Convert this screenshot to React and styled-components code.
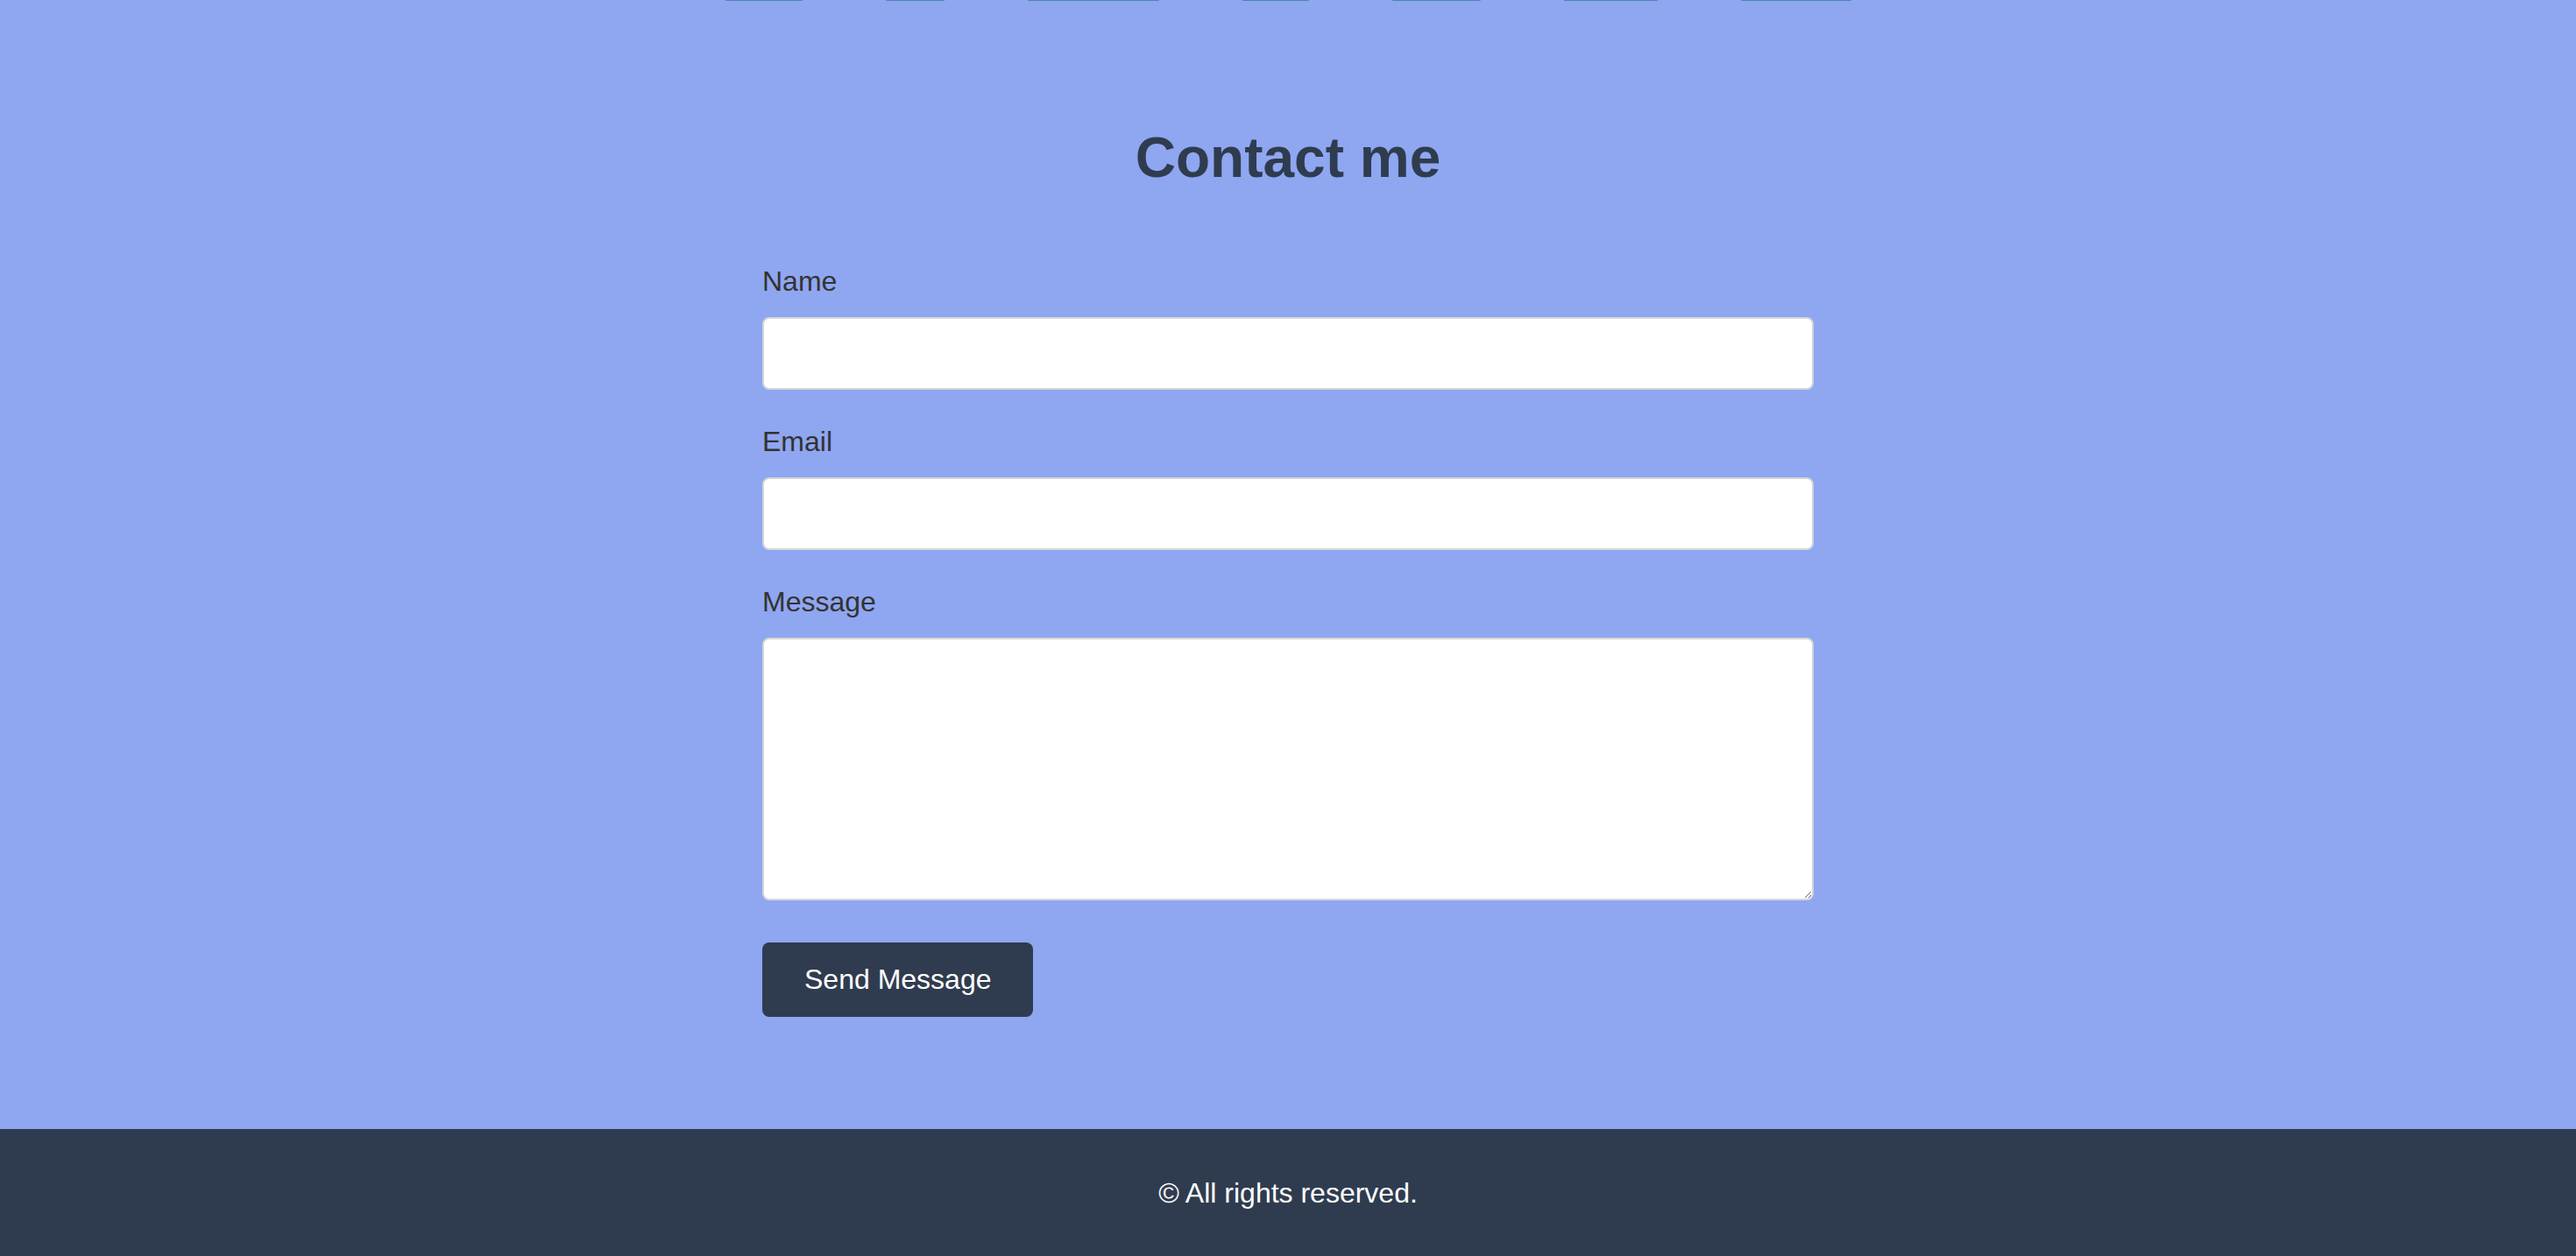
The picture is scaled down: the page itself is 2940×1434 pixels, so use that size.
import React from "react";
import styled, { createGlobalStyle } from "styled-components";

const navy = `#2f3c4f`
const periwinkle = `#8fa6f1`
const steel = `#4b87a9`

const GlobalStyle = createGlobalStyle`
  html, body {
    margin: 0;
    padding: 0;
    background: ${periwinkle};
    font-family: "Liberation Sans", Arial, sans-serif;
  }
  * {
    box-sizing: border-box;
  }
`;

const Page = styled.div`
  display: flex;
  flex-direction: column;
  min-height: 1434px;
  background: ${periwinkle};
`;

const TagStrip = styled.div`
  display: flex;
  justify-content: center;
  gap: 95px;
  height: 2px;
  overflow: hidden;
`;

const Tag = styled.span`
  width: ${(p) => p.$w}px;
  height: 1px;
  background: ${steel};
  border-radius: 0 0 6px 6px;
`;

const ContactSection = styled.section`
  flex: 1;
  padding: 142px 0 128px;
`;

const Title = styled.h2`
  margin: 0 0 87px;
  font-size: 64px;
  line-height: 72px;
  font-weight: 700;
  text-align: center;
  color: ${navy};
`;

const Form = styled.form`
  width: 1200px;
  margin: 0 auto;
  display: flex;
  flex-direction: column;
`;

const Group = styled.div`
  display: flex;
  flex-direction: column;
  margin-bottom: 41px;

  &:last-of-type {
    margin-bottom: 48px;
  }
`;

const Label = styled.label`
  font-size: 32px;
  line-height: 36px;
  color: #333333;
  margin-bottom: 23px;
`;

const Input = styled.input`
  width: 100%;
  height: 83px;
  padding: 0 20px;
  border: 2px solid #d6d6d6;
  border-radius: 8px;
  background: #ffffff;
  font-family: inherit;
  font-size: 32px;

  &:focus {
    outline: none;
  }
`;

const TextArea = styled.textarea`
  width: 100%;
  height: 300px;
  padding: 20px;
  border: 2px solid #d6d6d6;
  border-radius: 8px;
  background: #ffffff;
  font-family: inherit;
  font-size: 32px;
  resize: vertical;
  display: block;
`;

const SendBtn = styled.button`
  align-self: flex-start;
  height: 85px;
  padding: 0 48px;
  border: none;
  border-radius: 8px;
  background: ${navy};
  color: #ffffff;
  font-family: inherit;
  font-size: 32px;
  cursor: pointer;
`;

const Footer = styled.footer`
  background: ${navy};
  padding: 55px 0 56px;
  text-align: center;

  p {
    margin: 0;
    font-size: 32px;
    line-height: 36px;
    color: #ffffff;
  }
`;

const tags = [88, 67, 150, 76, 101, 107, 126];

export default function App() {
  return (
    <Page>
      <GlobalStyle />
      <TagStrip>
        {tags.map((w, i) => (
          <Tag key={i} $w={w} />
        ))}
      </TagStrip>
      <ContactSection>
        <Title>Contact me</Title>
        <Form onSubmit={(e) => e.preventDefault()}>
          <Group>
            <Label htmlFor="name">Name</Label>
            <Input id="name" type="text" />
          </Group>
          <Group>
            <Label htmlFor="email">Email</Label>
            <Input id="email" type="email" />
          </Group>
          <Group>
            <Label htmlFor="message">Message</Label>
            <TextArea id="message" />
          </Group>
          <SendBtn type="submit">Send Message</SendBtn>
        </Form>
      </ContactSection>
      <Footer>
        <p>© All rights reserved.</p>
      </Footer>
    </Page>
  );
}
